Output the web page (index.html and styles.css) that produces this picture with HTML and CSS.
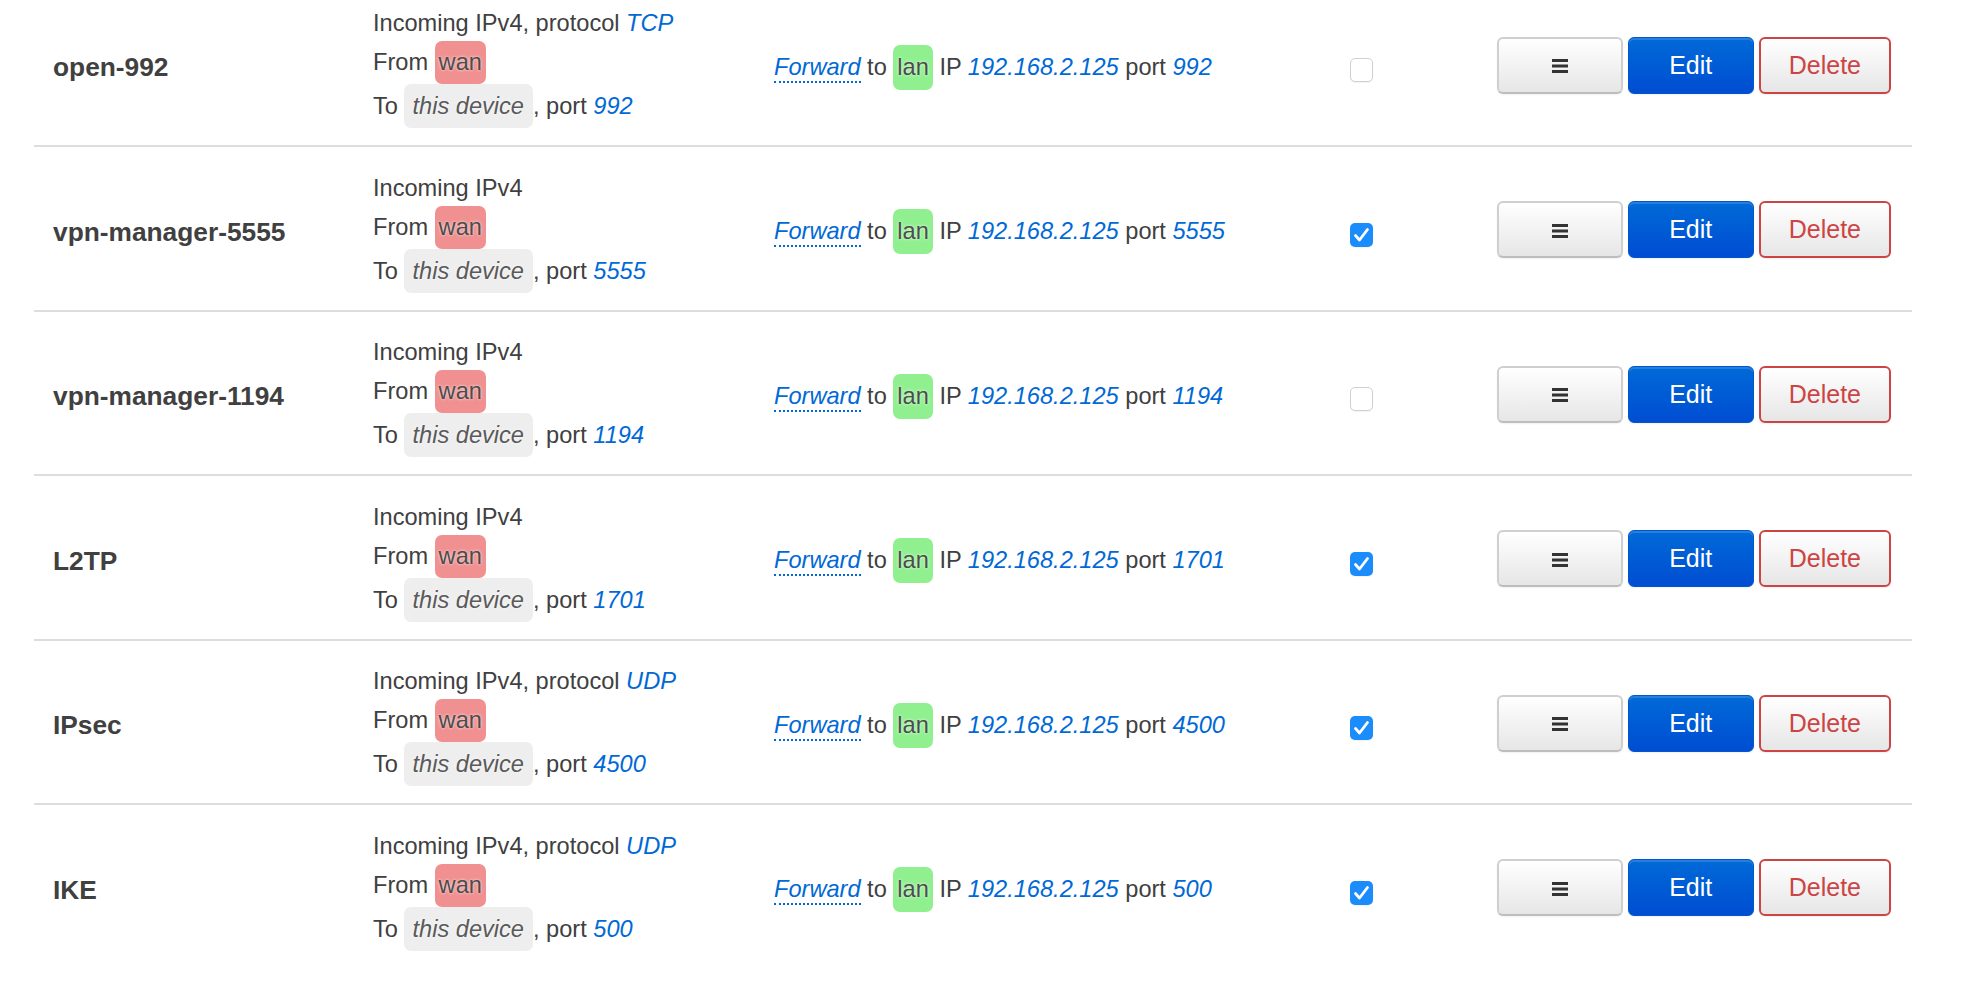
FILE: index.html
```html
<!DOCTYPE html>
<html lang="en">
<head>
  <meta charset="UTF-8" />
  <title>Firewall - Port Forwards</title>
  <link rel="stylesheet" href="styles.css">
</head>
<body>

  <div class="rules">

    <div class="rule">
      <div class="name">open-992</div>
      <div class="match">
        <div class="line">Incoming IPv4, protocol <var>TCP</var></div>
        <div class="line">From <span class="zone wan">wan</span></div>
        <div class="line">To <span class="zone device"><em>this device</em></span>, port <var>992</var></div>
      </div>
      <div class="action">
        <var class="tip">Forward</var> to <span class="zone lan">lan</span> IP <var>192.168.2.125</var> port <var>992</var>
      </div>
      <div class="enable"><span class="check"></span></div>
      <div class="buttons">
        <button class="btn handle" title="Drag to reorder"><svg viewBox="0 0 16 14"><rect y="0" width="16" height="3"/><rect y="5.5" width="16" height="3"/><rect y="11" width="16" height="3"/></svg></button>
        <button class="btn edit">Edit</button>
        <button class="btn remove">Delete</button>
      </div>
    </div>

    <div class="rule">
      <div class="name">vpn-manager-5555</div>
      <div class="match">
        <div class="line">Incoming IPv4</div>
        <div class="line">From <span class="zone wan">wan</span></div>
        <div class="line">To <span class="zone device"><em>this device</em></span>, port <var>5555</var></div>
      </div>
      <div class="action">
        <var class="tip">Forward</var> to <span class="zone lan">lan</span> IP <var>192.168.2.125</var> port <var>5555</var>
      </div>
      <div class="enable"><span class="check on"><svg viewBox="0 0 23 24"><path d="M5.5 12.5 L9.5 17 L17.5 6.5"/></svg></span></div>
      <div class="buttons">
        <button class="btn handle" title="Drag to reorder"><svg viewBox="0 0 16 14"><rect y="0" width="16" height="3"/><rect y="5.5" width="16" height="3"/><rect y="11" width="16" height="3"/></svg></button>
        <button class="btn edit">Edit</button>
        <button class="btn remove">Delete</button>
      </div>
    </div>

    <div class="rule">
      <div class="name">vpn-manager-1194</div>
      <div class="match">
        <div class="line">Incoming IPv4</div>
        <div class="line">From <span class="zone wan">wan</span></div>
        <div class="line">To <span class="zone device"><em>this device</em></span>, port <var>1194</var></div>
      </div>
      <div class="action">
        <var class="tip">Forward</var> to <span class="zone lan">lan</span> IP <var>192.168.2.125</var> port <var>1194</var>
      </div>
      <div class="enable"><span class="check"></span></div>
      <div class="buttons">
        <button class="btn handle" title="Drag to reorder"><svg viewBox="0 0 16 14"><rect y="0" width="16" height="3"/><rect y="5.5" width="16" height="3"/><rect y="11" width="16" height="3"/></svg></button>
        <button class="btn edit">Edit</button>
        <button class="btn remove">Delete</button>
      </div>
    </div>

    <div class="rule">
      <div class="name">L2TP</div>
      <div class="match">
        <div class="line">Incoming IPv4</div>
        <div class="line">From <span class="zone wan">wan</span></div>
        <div class="line">To <span class="zone device"><em>this device</em></span>, port <var>1701</var></div>
      </div>
      <div class="action">
        <var class="tip">Forward</var> to <span class="zone lan">lan</span> IP <var>192.168.2.125</var> port <var>1701</var>
      </div>
      <div class="enable"><span class="check on"><svg viewBox="0 0 23 24"><path d="M5.5 12.5 L9.5 17 L17.5 6.5"/></svg></span></div>
      <div class="buttons">
        <button class="btn handle" title="Drag to reorder"><svg viewBox="0 0 16 14"><rect y="0" width="16" height="3"/><rect y="5.5" width="16" height="3"/><rect y="11" width="16" height="3"/></svg></button>
        <button class="btn edit">Edit</button>
        <button class="btn remove">Delete</button>
      </div>
    </div>

    <div class="rule">
      <div class="name">IPsec</div>
      <div class="match">
        <div class="line">Incoming IPv4, protocol <var>UDP</var></div>
        <div class="line">From <span class="zone wan">wan</span></div>
        <div class="line">To <span class="zone device"><em>this device</em></span>, port <var>4500</var></div>
      </div>
      <div class="action">
        <var class="tip">Forward</var> to <span class="zone lan">lan</span> IP <var>192.168.2.125</var> port <var>4500</var>
      </div>
      <div class="enable"><span class="check on"><svg viewBox="0 0 23 24"><path d="M5.5 12.5 L9.5 17 L17.5 6.5"/></svg></span></div>
      <div class="buttons">
        <button class="btn handle" title="Drag to reorder"><svg viewBox="0 0 16 14"><rect y="0" width="16" height="3"/><rect y="5.5" width="16" height="3"/><rect y="11" width="16" height="3"/></svg></button>
        <button class="btn edit">Edit</button>
        <button class="btn remove">Delete</button>
      </div>
    </div>

    <div class="rule">
      <div class="name">IKE</div>
      <div class="match">
        <div class="line">Incoming IPv4, protocol <var>UDP</var></div>
        <div class="line">From <span class="zone wan">wan</span></div>
        <div class="line">To <span class="zone device"><em>this device</em></span>, port <var>500</var></div>
      </div>
      <div class="action">
        <var class="tip">Forward</var> to <span class="zone lan">lan</span> IP <var>192.168.2.125</var> port <var>500</var>
      </div>
      <div class="enable"><span class="check on"><svg viewBox="0 0 23 24"><path d="M5.5 12.5 L9.5 17 L17.5 6.5"/></svg></span></div>
      <div class="buttons">
        <button class="btn handle" title="Drag to reorder"><svg viewBox="0 0 16 14"><rect y="0" width="16" height="3"/><rect y="5.5" width="16" height="3"/><rect y="11" width="16" height="3"/></svg></button>
        <button class="btn edit">Edit</button>
        <button class="btn remove">Delete</button>
      </div>
    </div>

  </div>

</body>
</html>
```

FILE: styles.css
```css
body {
  margin: 0;
  background: #fff;
  color: #404040;
  font-family: "Liberation Sans", Arial, sans-serif;
  font-size: 23.6px;
  line-height: 36px;
  overflow: hidden;
}

.rules {
  width: 1878px;
  margin: -17.5px 0 0 34px;
}

.rule {
  display: grid;
  grid-template-columns: 339px 401px 576px 1fr auto;
  align-items: center;
  height: 162.5px;
  border-bottom: 2px solid #dddddd;
}

.rule:last-child {
  border-bottom: none;
}

.name {
  padding: 7px 0 0 19px;
  font-size: 26.3px;
  font-weight: bold;
}

.match {
  padding-top: 6px;
}

.action {
  padding-top: 7px;
}

var {
  color: #0069d6;
  font-style: italic;
}

var.tip {
  border-bottom: 2px dotted #0069d6;
  padding-bottom: 1px;
}

.zone {
  display: inline-block;
  line-height: 43px;
  padding: 0 4px;
  border-radius: 7px;
  color: #4c4c4c;
  text-shadow: 0 0 3px rgba(255,255,255,0.9);
}

.wan {
  background: #f09090;
}

.lan {
  background: #90f090;
  line-height: 45px;
}

.device {
  background: #eeeeee;
  padding: 0 9px 0 8px;
  line-height: 44px;
}

.device em {
  color: #5a5a5a;
}

.enable {
  padding-top: 13px;
}

.check {
  display: block;
  width: 23px;
  height: 24px;
  box-sizing: border-box;
  border: 1px solid #d0d0d0;
  border-radius: 5px;
  background: #fff;
  box-shadow: 0 1px 1px rgba(0,0,0,0.05);
}

.check.on {
  border: none;
  background: #1b8cfb;
}

.check svg {
  display: block;
  width: 23px;
  height: 24px;
  fill: none;
  stroke: #fff;
  stroke-width: 2.8;
  stroke-linecap: round;
  stroke-linejoin: round;
}

.buttons {
  display: flex;
  gap: 5px;
  padding: 3px 21px 0 0;
}

.btn {
  height: 57px;
  min-width: 126px;
  padding: 0 28px;
  box-sizing: border-box;
  font-family: "Liberation Sans", Arial, sans-serif;
  font-size: 25px;
  color: #333;
  background: linear-gradient(#ffffff, #e6e6e6);
  border: 2px solid #cfcfcf;
  border-bottom-color: #bdbdbd;
  border-radius: 6px;
  box-shadow: 0 1px 2px rgba(0,0,0,0.06);
  cursor: pointer;
}

.handle svg {
  display: block;
  width: 16px;
  height: 14px;
  margin: 2px auto 0;
  fill: #333;
}

.edit {
  color: #fff;
  background: linear-gradient(#006ad8, #004dd2);
  border: 1px solid #0058cc;
  box-shadow: inset 0 2px 0 rgba(255,255,255,0.15), 0 1px 2px rgba(0,0,0,0.06);
}

.remove {
  color: #cc4444;
  border-color: #cc4444;
}
```
